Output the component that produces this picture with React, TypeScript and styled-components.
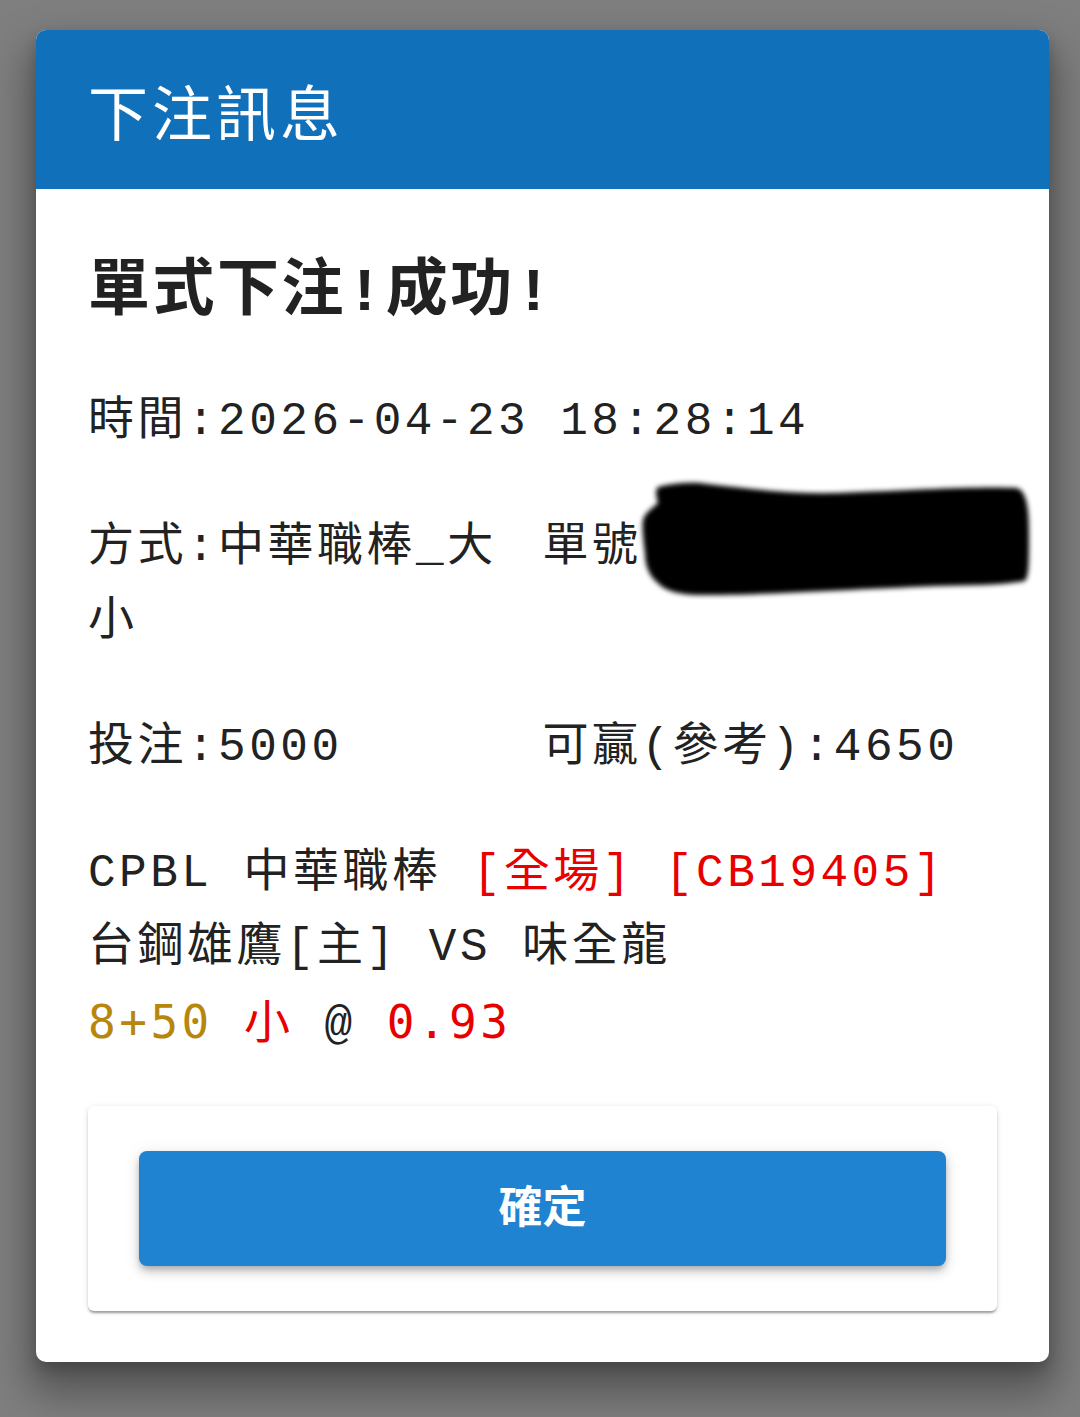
import React from "react";
import styled, { createGlobalStyle } from "styled-components";

const Global = createGlobalStyle`
  html, body {
    margin: 0;
    padding: 0;
    background: #7f7f7f;
  }
  body {
    font-family: "Liberation Mono", "Noto Sans CJK TC", monospace;
    color: #222;
  }
`;

const Page = styled.div`
  box-sizing: border-box;
  min-height: 1417px;
  padding: 30px 0 55px 36px;
  background: #7f7f7f;
`;

const Dialog = styled.section`
  width: 1013px;
  background: #fff;
  border-radius: 10px;
  overflow: hidden;
  box-shadow: 0 24px 42px 8px rgba(0, 0, 0, 0.34), 0 8px 14px rgba(0, 0, 0, 0.18);
`;

const Header = styled.header`
  box-sizing: border-box;
  height: 159px;
  display: flex;
  align-items: center;
  padding-left: 52px;
  background: #1170ba;
  color: #fff;
  font-family: "Noto Sans CJK TC", sans-serif;
  font-size: 60px;
  font-weight: 400;
  letter-spacing: 4px;
`;

const Body = styled.div`
  display: flex;
  flex-direction: column;
  padding: 65px 52px 51px;
`;

const Title = styled.h2`
  margin: 0 0 51px;
  font-size: 62px;
  font-weight: 700;
  line-height: 80px;
  letter-spacing: 2.5px;
  color: #222;
`;

const Rows = styled.div`
  display: flex;
  flex-direction: column;
  gap: 52px;
`;

const Row = styled.div`
  font-size: 46px;
  line-height: 74px;
  letter-spacing: 3.5px;
`;

const GridRow = styled(Row)`
  display: grid;
  grid-template-columns: 1fr 1fr;
`;

const Cell = styled.div`
  position: relative;
`;

const Redaction = styled.svg`
  position: absolute;
  left: 94px;
  top: -33px;
  width: 400px;
  height: 125px;
  overflow: visible;
`;

const Line = styled.div``;

const Red = styled.span`
  color: #e80000;
`;

const Gold = styled.span`
  color: #b8860b;
  font-family: "DejaVu Sans Mono", "Noto Sans CJK TC", monospace;
`;

const SansRed = styled(Red)`
  font-family: "DejaVu Sans Mono", "Noto Sans CJK TC", monospace;
`;

const Card = styled.div`
  margin-top: 43px;
  padding: 45px 51px;
  border-radius: 6px;
  background: #fff;
  box-shadow: 0 3px 2px -1px rgba(0, 0, 0, 0.25), 0 2px 3px rgba(0, 0, 0, 0.12),
    0 1px 6px rgba(0, 0, 0, 0.1);
`;

const ConfirmButton = styled.button`
  box-sizing: border-box;
  display: flex;
  align-items: center;
  justify-content: center;
  width: 100%;
  height: 115px;
  padding: 0 0 10px;
  border: none;
  border-radius: 8px;
  background: #2083d2;
  color: #fff;
  font-family: "Noto Sans CJK TC", sans-serif;
  font-size: 44px;
  font-weight: 700;
  box-shadow: 0 4px 6px -1px rgba(0, 0, 0, 0.22), 0 7px 12px rgba(0, 0, 0, 0.12),
    0 1px 18px rgba(0, 0, 0, 0.08);
  cursor: pointer;
`;

export default function App() {
  return (
    <>
      <Global />
      <Page>
        <Dialog>
          <Header>下注訊息</Header>
          <Body>
            <Title>單式下注!成功!</Title>
            <Rows>
              <Row>時間:2026-04-23 18:28:14</Row>
              <GridRow>
                <Cell>方式:中華職棒_大小</Cell>
                <Cell>
                  單號:
                  <Redaction viewBox="0 0 400 125" aria-hidden="true">
                    <defs>
                      <filter id="soft" x="-10%" y="-20%" width="120%" height="140%">
                        <feGaussianBlur stdDeviation="2.5" />
                      </filter>
                    </defs>
                    <path
                      filter="url(#soft)"
                      fill="#000"
                      d="M21 9 C40 4 60 4 70 6 C120 12 160 16 200 15 C280 12 340 8 380 10 C392 14 392 40 392 60 C392 85 392 98 388 103 C360 108 330 107 300 108 C200 112 110 118 60 117 C45 117 28 113 22 106 C14 100 8 90 8 75 C6 60 5 48 6 42 C8 34 16 30 21 25 C19 18 18 12 21 9 Z"
                    />
                  </Redaction>
                </Cell>
              </GridRow>
              <GridRow>
                <Cell>投注:5000</Cell>
                <Cell>可贏(參考):4650</Cell>
              </GridRow>
              <Row>
                <Line>
                  CPBL 中華職棒 <Red>[全場]</Red> <Red>[CB19405]</Red>
                </Line>
                <Line>台鋼雄鷹[主] VS 味全龍</Line>
                <Line>
                  <Gold>8+50</Gold> <Red>小</Red> @ <SansRed>0.93</SansRed>
                </Line>
              </Row>
            </Rows>
            <Card>
              <ConfirmButton type="button">確定</ConfirmButton>
            </Card>
          </Body>
        </Dialog>
      </Page>
    </>
  );
}
